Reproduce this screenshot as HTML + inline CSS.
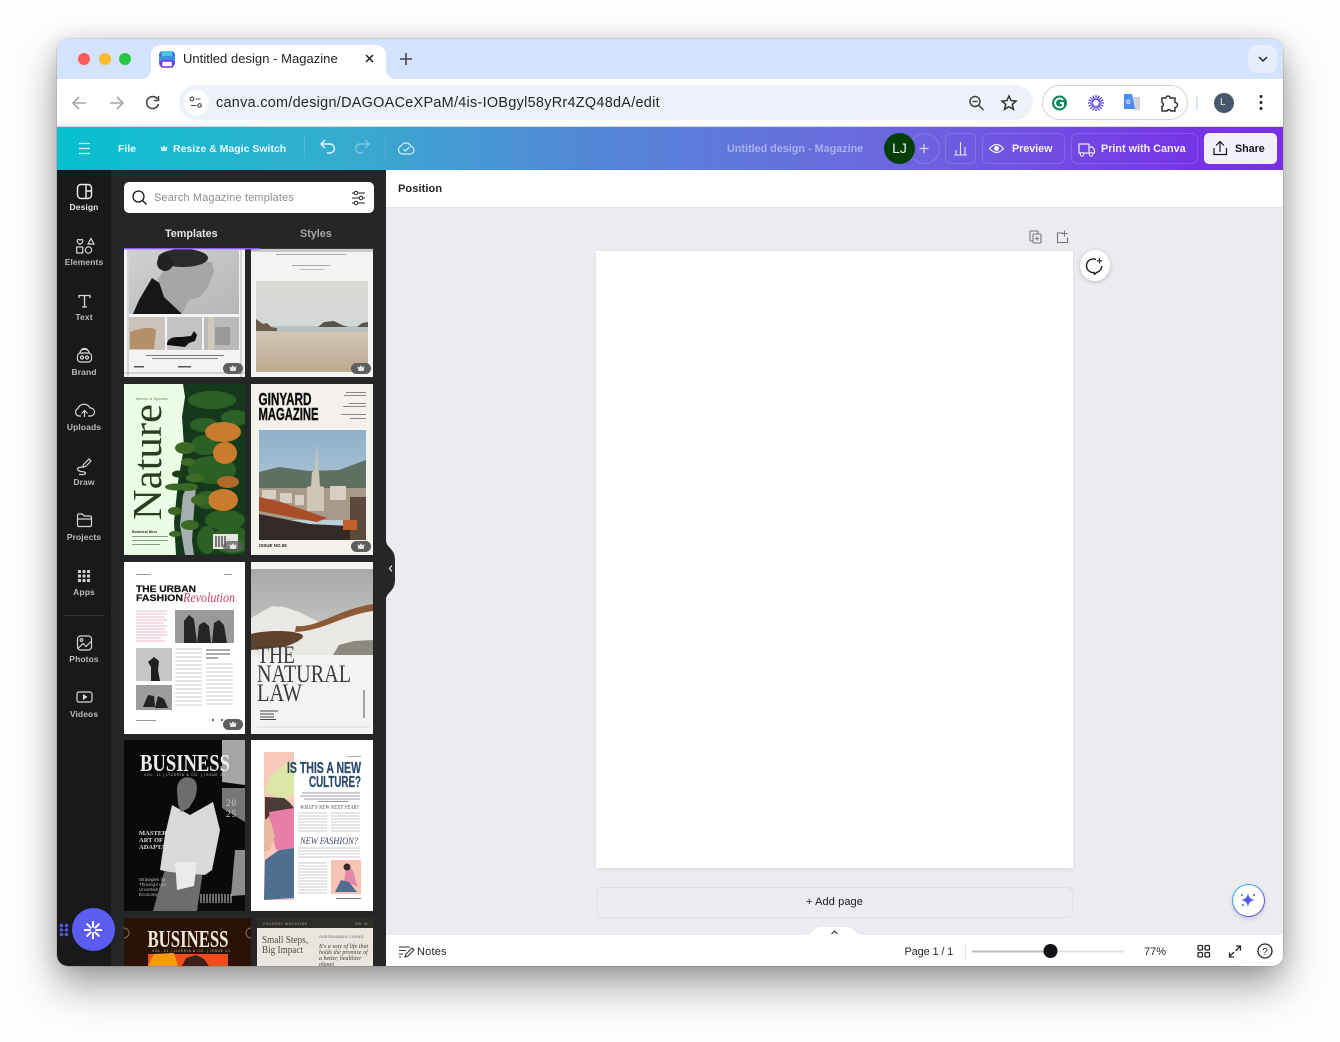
<!DOCTYPE html>
<html><head><meta charset="utf-8"><title>Untitled design - Magazine</title>
<style>
*{box-sizing:border-box}
html,body{margin:0;padding:0;width:1340px;height:1042px;overflow:hidden;background:#fdfdfd;font-family:"Liberation Sans",sans-serif}
.a{position:absolute}
#win{position:absolute;left:57px;top:39px;width:1226px;height:927px;border-radius:11px;box-shadow:0 0 1px rgba(0,0,0,.5),0 20px 40px rgba(0,0,0,.36),0 2px 22px rgba(0,0,0,.14)}
.t{position:absolute;white-space:nowrap}
.rail{position:absolute;left:57px;width:54px;text-align:center;font-size:8.5px;color:#b9babd;font-weight:bold;letter-spacing:.1px}
.hb{position:absolute;top:133px;height:31px;border:1px solid rgba(255,255,255,.14);border-radius:6px}
svg{position:absolute;overflow:visible}
#thumbs{filter:blur(.3px)}
</style></head><body>
<div id="win"></div>
<div class="a" style="left:57px;top:39px;width:1226px;height:927px;border-radius:11px;overflow:hidden;background:#fff">
<div class="a" style="left:0;top:0;width:1226px;height:40px;background:#d3e3fd"></div>
</div>
<!-- traffic lights -->
<div class="a" style="left:78px;top:53px;width:12px;height:12px;border-radius:50%;background:#fd5c57"></div>
<div class="a" style="left:99px;top:53px;width:12px;height:12px;border-radius:50%;background:#febb2e"></div>
<div class="a" style="left:119px;top:53px;width:12px;height:12px;border-radius:50%;background:#27c83f"></div>
<!-- tab -->
<div class="a" style="left:151px;top:45px;width:235px;height:34px;background:#fff;border-radius:10px 10px 0 0"></div>
<svg style="left:0;top:0" width="1340" height="130">
<path d="M141 79a10 10 0 0 0 10-10v10z" fill="#fff"/><path d="M396 79a10 10 0 0 1-10-10v10z" fill="#fff"/>
<rect x="159" y="51" width="16" height="16" rx="4" fill="#4a63e0"/><rect x="161.500" y="51" width="11" height="5" fill="#49c6dd"/><rect x="159" y="56" width="16" height="5" fill="#3f8fe2"/><rect x="161.500" y="61" width="11" height="6" rx="1" fill="#fff" stroke="#7d2ae8" stroke-width="1.500"/>
<path d="M366 55l7 7M373 55l-7 7" stroke="#1f1f1f" stroke-width="1.500"/>
<path d="M406 53v12M400 59h12" stroke="#444" stroke-width="1.600"/>
<path d="M86 103H74M79 97l-6 6 6 6" fill="none" stroke="#a5a7aa" stroke-width="1.600"/>
<path d="M110 103h12M117 97l6 6-6 6" fill="none" stroke="#a5a7aa" stroke-width="1.600"/>
<path d="M157.500 99a6 6 0 1 0 1 5" fill="none" stroke="#474747" stroke-width="1.600"/><path d="M158.500 96v4.500H154" fill="none" stroke="#474747" stroke-width="1.500"/>
</svg>
<div class="t" style="left:183px;top:51px;font-size:13px;color:#1f1f1f;letter-spacing:.03px">Untitled design - Magazine</div>
<!-- chevron pill -->
<div class="a" style="left:1248px;top:45px;width:29px;height:28px;border-radius:9px;background:#e6eefc"></div>
<svg style="left:0;top:0" width="1340" height="130"><path d="M1259 57l4 4 4-4" fill="none" stroke="#222" stroke-width="1.500"/></svg>
<!-- omnibox -->
<div class="a" style="left:179px;top:85px;width:854px;height:35px;border-radius:18px;background:#edf1f8"></div>
<div class="a" style="left:184px;top:90px;width:25px;height:25px;border-radius:50%;background:#fff"></div>
<svg style="left:0;top:0" width="1340" height="130">
<circle cx="192" cy="99" r="1.800" fill="none" stroke="#444" stroke-width="1.100"/><path d="M195.500 99h5M191 105.500h5.500" stroke="#444" stroke-width="1.100"/><circle cx="199.500" cy="105.500" r="1.800" fill="none" stroke="#444" stroke-width="1.100"/>
<circle cx="975" cy="101.500" r="5" fill="none" stroke="#444" stroke-width="1.500"/><path d="M979 105.500l4.500 4.500M972.500 101.500h5" stroke="#444" stroke-width="1.500"/>
<path d="M1009 96l2.100 4.600 5 .5-3.800 3.300 1.200 4.900-4.500-2.600-4.500 2.600 1.200-4.900-3.800-3.300 5-.5z" fill="none" stroke="#333" stroke-width="1.500"/>
</svg>
<div class="t" style="left:216px;top:95px;font-size:14.400px;color:#262626;letter-spacing:.3px">canva.com/design/DAGOACeXPaM/4is-IOBgyl58yRr4ZQ48dA/edit</div>
<!-- extension pill -->
<div class="a" style="left:1042px;top:85px;width:146px;height:35px;border-radius:18px;background:#fff;border:1.500px solid #d3d4d6"></div>
<svg style="left:0;top:0" width="1340" height="130">
<circle cx="1059.500" cy="103" r="7.500" fill="#14855f"/><path d="M1063 100a4.500 4.500 0 1 0 0 6v-3h-3" fill="none" stroke="#fff" stroke-width="1.800"/>
<g stroke="#5546ff" stroke-width="1.300"><path d="M1096 95v16M1088 103h16M1090.300 97.300l11.400 11.400M1101.700 97.300l-11.400 11.400M1092.800 95.600l6.400 14.800M1099.200 95.600l-6.400 14.800M1088.600 99.800l14.800 6.400M1103.400 99.800l-14.800 6.400"/></g><circle cx="1096" cy="103" r="3" fill="#fff"/>
<path d="M1132 97h8v13h-6z" fill="#cfd2d6"/><path d="M1124 94h8l3 15h-11z" fill="#4a8df0"/><text x="1126" y="104" font-size="6" fill="#fff" font-family="Liberation Sans" font-weight="bold">G</text>
<path d="M1162 98h4a2 2 0 0 1 4 0h5v4.500a2.200 2.200 0 0 1 0 5v3.500h-4a2.200 2.200 0 0 0-4 0h-5v-4.500a2.200 2.200 0 0 0 0-4z" fill="none" stroke="#333" stroke-width="1.500"/>
<path d="M1197 96v14" stroke="#c9dcf7" stroke-width="1.500"/>
<circle cx="1224" cy="103" r="10" fill="#45586c"/><circle cx="1261" cy="96.500" r="1.500" fill="#222"/><circle cx="1261" cy="102.500" r="1.500" fill="#222"/><circle cx="1261" cy="108.500" r="1.500" fill="#222"/>
</svg>
<div class="t" style="left:1220px;top:97px;font-size:10px;color:#e6ebef">L</div>
<div class="a" style="left:57px;top:126px;width:1226px;height:1px;background:#d9dadc"></div>
<!-- canva header -->
<div class="a" style="left:57px;top:127px;width:1226px;height:43px;background:linear-gradient(90deg,#05c0cf 0%,#34aecf 22%,#5289d6 42%,#6c67df 68%,#7636e6 92%,#7a2ee8 100%)"></div>
<svg style="left:0;top:0" width="1340" height="175">
<path d="M79 143.500h11M79 148.500h11M79 153.500h11" stroke="#d6f3f6" stroke-width="1.300"/>
<path d="M160.500 146l2 1.600 1.500-2.300 1.500 2.300 2-1.600-.8 5h-5.400z" fill="#c9eef3"/>
<path d="M304.500 137v22" stroke="#7cc8db" stroke-width=".8" stroke-dasharray="1 1"/>
<path d="M385 137v22" stroke="#67a9d6" stroke-width=".8"/>
<path d="M321 144h9a4.500 4.500 0 0 1 0 9h-3M325 140l-4 4 4 4" fill="none" stroke="#e8f6f9" stroke-width="1.400"/>
<path d="M369 144h-9a4.500 4.500 0 0 0 0 9h3M365 140l4 4-4 4" fill="none" stroke="#7ecbe0" stroke-width="1.400"/>
<path d="M403 154h7.500a3.800 3.800 0 0 0 .5-7.500 5.500 5.500 0 0 0-10-.5 4.200 4.200 0 0 0 2 8z" fill="none" stroke="#d8eef6" stroke-width="1.200"/><path d="M403.500 149l2 2 4-4" fill="none" stroke="#d8eef6" stroke-width="1.200"/>
</svg>
<div class="t" style="left:118px;top:143px;font-size:10.500px;font-weight:bold;color:#eefbfc">File</div>
<div class="t" style="left:173px;top:143px;font-size:10.500px;font-weight:bold;color:#eafafc">Resize &amp; Magic Switch</div>
<div class="t" style="left:727px;top:143px;font-size:10.800px;font-weight:bold;color:#a9b1ef">Untitled design - Magazine</div>
<div class="a" style="left:909px;top:133px;width:31px;height:31px;border-radius:50%;border:1px solid rgba(255,255,255,.16)"></div>
<div class="a" style="left:884px;top:133px;width:31px;height:31px;border-radius:50%;background:#063f06;color:#eef;font-size:14px;line-height:31px;text-align:center">LJ</div>
<div class="hb" style="left:945px;width:31px"></div>
<div class="hb" style="left:982px;width:83px"></div>
<div class="hb" style="left:1071px;width:127px"></div>
<div class="a" style="left:1204px;top:133px;width:73px;height:31px;border-radius:5px;background:#f2f0fc"></div>
<svg style="left:0;top:0" width="1340" height="175">
<path d="M924 144v9M919.500 148.500h9" stroke="#d8d4f8" stroke-width="1.300"/>
<path d="M954 155h13M956 155v-5M960.500 155v-13M965 155v-8" stroke="#e6e3fb" stroke-width="1.100"/>
<path d="M989.500 148.500q7-8 14 0q-7 8-14 0z" fill="none" stroke="#efecfd" stroke-width="1.200"/><circle cx="996.500" cy="148.500" r="2.500" fill="#efecfd"/>
<path d="M1079 144h9a1 1 0 0 1 1 1v8h-10zM1089 147h3.500l2 3v3h-5.500z" fill="none" stroke="#efecfd" stroke-width="1.200"/><circle cx="1082" cy="154.500" r="1.700" fill="#7638e5" stroke="#efecfd"/><circle cx="1091" cy="154.500" r="1.700" fill="#7638e5" stroke="#efecfd"/>
<path d="M1220 152v-10M1216 145.500l4-4 4 4M1214 148v6.500h12.500V148" fill="none" stroke="#17171f" stroke-width="1.200"/>
</svg>
<div class="t" style="left:1012px;top:143px;font-size:10.700px;font-weight:bold;color:#f2f0fd">Preview</div>
<div class="t" style="left:1101px;top:143px;font-size:10.800px;font-weight:bold;color:#f2f0fd">Print with Canva</div>
<div class="t" style="left:1235px;top:143px;font-size:10.700px;font-weight:bold;color:#14141c">Share</div>
<!-- side -->
<div class="a" style="left:57px;top:170px;width:54px;height:796px;background:#18191b;border-bottom-left-radius:11px"></div>
<div class="a" style="left:111px;top:170px;width:275px;height:796px;background:#252627"></div>
<div class="a" style="left:386px;top:170px;width:897px;height:37px;background:#fff"></div>
<div class="a" style="left:386px;top:207px;width:897px;height:728px;background:#ebecf0"></div>
<div class="a" style="left:386px;top:935px;width:897px;height:31px;background:#fff;border-bottom-right-radius:11px"></div>
<div class="a" style="left:386px;top:207px;width:897px;height:1px;background:#e3e4e8"></div>
<!-- rail labels -->
<div class="rail" style="top:201.500px;color:#e8e8ea">Design</div>
<div class="rail" style="top:256.500px">Elements</div>
<div class="rail" style="top:311.500px">Text</div>
<div class="rail" style="top:366.500px">Brand</div>
<div class="rail" style="top:421.500px">Uploads</div>
<div class="rail" style="top:476.500px">Draw</div>
<div class="rail" style="top:531.500px">Projects</div>
<div class="rail" style="top:586.500px">Apps</div>
<div class="rail" style="top:653.500px">Photos</div>
<div class="rail" style="top:708.500px">Videos</div>
<svg style="left:0;top:0" width="400" height="970">
<g fill="none" stroke="#d6d7d9" stroke-width="1.200">
<g stroke="#f0f0f2" stroke-width="1.400"><rect x="77.500" y="184.500" width="14" height="14" rx="3.500"/><path d="M86 185v13M86 191h5"/></g>
<path d="M80 244.500c-4-3-3-5-1.500-5s1.500 1 1.500 1 .5-1 1.800-1 2 2.500-1.800 5zM88 244l3-5.500 3 5.500z"/><rect x="76.700" y="247" width="6" height="6"/><circle cx="88.500" cy="250" r="3.200"/>
<path d="M79 298v-2.500h11v2.500M84.500 295.500v11.500M82 307h5" stroke-width="1.300"/>
<rect x="77.500" y="353" width="14" height="9" rx="3"/><path d="M80 353c0-5 9-5 9 0M81 350c2-2 5-2 7 0"/><circle cx="82" cy="357.500" r="1.500"/><circle cx="87" cy="357.500" r="1.500"/>
<path d="M81 416h-2.500a4 4 0 0 1-.5-7.500 6.500 6.500 0 0 1 12-.5 4 4 0 0 1 1 8h-3M84.500 417v-6M81.500 413.500l3-3 3 3"/>
<path d="M89 459l2 2-5.500 5.500-2.500 .5 .5-2.500zM84 467c-6 0-8 1.500-5.500 3.500s7 .5 7 2.500-3 1.500-6.500 1.500"/>
<path d="M77.500 525v-9.500a1.500 1.500 0 0 1 1.500-1.500h3.500l1.500 2h6a1.500 1.500 0 0 1 1.500 1.500v7.500a1.500 1.500 0 0 1-1.500 1.500H79a1.500 1.500 0 0 1-1.500-1.500zM77.500 519h14"/>
<rect x="77.500" y="636" width="14" height="14" rx="3"/><circle cx="81.500" cy="640" r="1.300"/><path d="M78 648.500l5-5 3 3 5-5"/>
<rect x="77" y="692" width="15" height="10" rx="2"/><path d="M83.500 695v4l3-2z" fill="#d6d7d9"/>
</g>
<g fill="#d6d7d9"><rect x="78" y="570" width="3" height="3" rx=".8"/><rect x="82.500" y="570" width="3" height="3" rx=".8"/><rect x="87" y="570" width="3" height="3" rx=".8"/><rect x="78" y="574.500" width="3" height="3" rx=".8"/><rect x="82.500" y="574.500" width="3" height="3" rx=".8"/><rect x="87" y="574.500" width="3" height="3" rx=".8"/><rect x="78" y="579" width="3" height="3" rx=".8"/><rect x="82.500" y="579" width="3" height="3" rx=".8"/><rect x="87" y="579" width="3" height="3" rx=".8"/></g>
<path d="M64 615.500h41" stroke="#303134"/>
<g fill="#4f5bd5"><circle cx="61.500" cy="925.500" r="1.800"/><circle cx="66.500" cy="925.500" r="1.800"/><circle cx="61.500" cy="930" r="1.800"/><circle cx="66.500" cy="930" r="1.800"/><circle cx="61.500" cy="934.500" r="1.800"/><circle cx="66.500" cy="934.500" r="1.800"/></g>
</svg>
<div class="a" style="left:72px;top:908px;width:43px;height:43px;border-radius:50%;background:#5b5cf0"></div>
<svg style="left:0;top:0" width="400" height="970"><g stroke="#fff" stroke-width="2"><path d="M93 921v18M84 930h18M86.600 923.600l12.800 12.800M99.400 923.600l-12.800 12.800"/></g><circle cx="93" cy="930" r="2.500" fill="#5b5cf0"/></svg>
<!-- search -->
<div class="a" style="left:124px;top:182px;width:250px;height:31px;border-radius:5px;background:#fff"></div>
<svg style="left:0;top:0" width="400" height="240">
<circle cx="138.500" cy="196.500" r="5.500" fill="none" stroke="#16171a" stroke-width="1.300"/><path d="M142.500 200.500l4 4" stroke="#16171a" stroke-width="1.300"/>
<path d="M352 193h13M352 198h13M352 203h13" stroke="#222" stroke-width="1"/><circle cx="356" cy="193" r="1.800" fill="#fff" stroke="#222"/><circle cx="361" cy="198" r="1.800" fill="#fff" stroke="#222"/><circle cx="356" cy="203" r="1.800" fill="#fff" stroke="#222"/>
</svg>
<div class="t" style="left:154px;top:192px;font-size:10.800px;color:#8b8c90;letter-spacing:.25px">Search Magazine templates</div>
<div class="t" style="left:165px;top:228px;font-size:10.800px;font-weight:bold;color:#e6e6e8">Templates</div>
<div class="t" style="left:300px;top:228px;font-size:10.800px;font-weight:bold;color:#a5a6a9">Styles</div>
<div class="a" style="left:124px;top:248px;width:250px;height:1px;background:#3a3b3d"></div>
<!-- thumbnails -->
<svg id="thumbs" style="left:0;top:0" width="400" height="966" font-family="Liberation Sans">
<defs>
<linearGradient id="g1" x1="0" y1="0" x2="1" y2="1"><stop offset="0" stop-color="#cfd0d1"/><stop offset="1" stop-color="#b5b6b8"/></linearGradient>
<linearGradient id="sky" x1="0" y1="0" x2="0" y2="1"><stop offset="0" stop-color="#d9dad6"/><stop offset="1" stop-color="#cfd5d4"/></linearGradient>
<linearGradient id="sand" x1="0" y1="0" x2="0" y2="1"><stop offset="0" stop-color="#d4c8b6"/><stop offset="1" stop-color="#bba98f"/></linearGradient>
<linearGradient id="blue" x1="0" y1="0" x2="0" y2="1"><stop offset="0" stop-color="#8eb1c9"/><stop offset="1" stop-color="#c5d3dc"/></linearGradient>
<linearGradient id="snow" x1="0" y1="0" x2="0" y2="1"><stop offset="0" stop-color="#a8aaa8"/><stop offset="1" stop-color="#cdcdc9"/></linearGradient>
<clipPath id="c0"><rect x="124" y="249" width="249" height="717"/></clipPath>
<clipPath id="c7"><rect x="124" y="740" width="121" height="171"/></clipPath>
<clipPath id="c3"><rect x="124" y="384" width="121" height="171"/></clipPath>
</defs>
<g clip-path="url(#c0)">
<!-- 1 -->
<rect x="124" y="249" width="121" height="128" fill="#f3f3f5"/>
<rect x="129" y="250" width="110" height="64" fill="url(#g1)"/>
<path d="M133 314l6-14 13-22 12 8 6 10 12 18z" fill="#171717"/>
<path d="M170 262l42 0 2 10-3 7-4 10-7 8-11 3-7 14-18-17-6-18z" fill="#a6a6a6"/>
<ellipse cx="183" cy="258" rx="25" ry="9" fill="#2b2b2b"/><circle cx="165" cy="263" r="8" fill="#222"/>
<rect x="129" y="317" width="36" height="33" fill="#c9c3bb"/><path d="M130 349v-17c10-4 22-6 26-2l-2 19z" fill="#b58f68"/>
<rect x="167" y="317" width="35" height="33" fill="#c3c3c3"/><path d="M167 345c0-8 8-8 14-8l10-1 3-5 3 4-2 6-6 2-4 4z" fill="#101010"/>
<rect x="204" y="317" width="35" height="33" fill="#b9babb"/><rect x="208" y="317" width="6" height="33" fill="#d0c8ba"/><rect x="215" y="327" width="15" height="18" fill="#9a9a9a"/>
<rect x="146" y="355" width="78" height="1" fill="#777"/><rect x="152" y="358" width="66" height="1" fill="#888"/>
<rect x="134" y="366" width="10" height="1.500" fill="#555"/><rect x="178" y="366" width="13" height="1.500" fill="#555"/>
<path d="M124 373h121M128 377v-128M241 377v-128" stroke="#9d9d9f" stroke-width=".7"/>
<!-- 2 -->
<rect x="251" y="249" width="122" height="128" fill="#f3f3f3"/>
<rect x="251" y="249" width="122" height="3" fill="#c8c8c8"/>
<rect x="276" y="254" width="70" height="1" fill="#aaa"/><rect x="292" y="265" width="38" height="1" fill="#aaa"/><rect x="300" y="269" width="24" height="1" fill="#bbb"/>
<rect x="256" y="281" width="112" height="91" fill="url(#sky)"/>
<rect x="256" y="328" width="112" height="44" fill="url(#sand)"/>
<rect x="256" y="326" width="112" height="6" fill="#b9c1c2"/>
<path d="M256 319l7 5 4-1 4 4 6 1v3h-21z" fill="#6d5a4a"/>
<path d="M318 327l6-5 10-1 8 4 6 2z" fill="#56544b"/><path d="M357 327l5-4 6-1v5z" fill="#5b584e"/>
<!-- 3 -->
<rect x="124" y="384" width="121" height="171" fill="#15391a"/>
<g clip-path="url(#c3)">
<g fill="#2c6126"><ellipse cx="212" cy="400" rx="24" ry="9" /><ellipse cx="235" cy="418" rx="14" ry="8"/><ellipse cx="204" cy="425" rx="14" ry="7"/><ellipse cx="205" cy="445" rx="14" ry="10"/><ellipse cx="212" cy="470" rx="24" ry="14"/><ellipse cx="225" cy="520" rx="20" ry="10"/><ellipse cx="232" cy="540" rx="20" ry="14"/><ellipse cx="208" cy="500" rx="14" ry="9"/><ellipse cx="207" cy="540" rx="10" ry="14"/></g>
<path d="M124 384h59l2 13-3 20 2 30-6 35-4 40 2 33h-52z" fill="#ecfde5"/>
<path d="M185 555l-5-30 3-30 5-10 8 1-2 25-2 30 2 14z" fill="#a6aeb0"/>
<g fill="#c97c2c"><ellipse cx="223" cy="432" rx="18" ry="10"/><ellipse cx="225" cy="453" rx="12" ry="11"/><ellipse cx="228" cy="482" rx="11" ry="6" fill="#b06a28"/><ellipse cx="223" cy="500" rx="15" ry="11"/></g>
<g fill="#3c6a24"><ellipse cx="185" cy="448" rx="10" ry="6"/><ellipse cx="188" cy="462" rx="7" ry="4"/><ellipse cx="195" cy="478" rx="9" ry="4.500"/><ellipse cx="178" cy="474" rx="6" ry="3.500" fill="#1f3d16"/><ellipse cx="176" cy="487" rx="11" ry="3.500"/><ellipse cx="188" cy="487" rx="10" ry="4"/><ellipse cx="200" cy="500" rx="9" ry="5"/><ellipse cx="175" cy="511" rx="7" ry="4"/><ellipse cx="190" cy="525" rx="9" ry="5"/><ellipse cx="175" cy="534" rx="6" ry="3"/></g>
<text transform="translate(161,520) rotate(-90)" font-family="Liberation Serif" font-size="41" fill="#2b3d20" textLength="116" lengthAdjust="spacingAndGlyphs">Nature</text>
<text x="136" y="400" font-size="4" fill="#6a7d60">Interior &amp; Spacew</text>
<text x="132" y="533" font-size="3.500" font-weight="bold" fill="#333">Botanical Bliss</text>
<rect x="132" y="536" width="36" height="1" fill="#8a9a84"/><rect x="132" y="540" width="36" height="1" fill="#8a9a84"/><rect x="132" y="544" width="28" height="1" fill="#8a9a84"/>
<rect x="213" y="534" width="25" height="15" fill="#e4e4e2"/><path d="M216 536v11M219 536v11M222 536v11M225 536v11" stroke="#333" stroke-width="1.200"/>
</g>
<!-- 4 -->
<rect x="251" y="384" width="122" height="171" fill="#f4f0ec"/>
<text x="258.500" y="405" font-size="17.500" font-weight="bold" fill="#0d0d0d" stroke="#0d0d0d" stroke-width=".4" textLength="53" lengthAdjust="spacingAndGlyphs">GINYARD</text>
<text x="258.500" y="420" font-size="17.500" font-weight="bold" fill="#0d0d0d" stroke="#0d0d0d" stroke-width=".4" textLength="60" lengthAdjust="spacingAndGlyphs">MAGAZINE</text>
<g fill="#888"><rect x="346" y="392" width="20" height="1"/><rect x="344" y="395" width="22" height="1"/><rect x="349" y="403" width="17" height="1"/><rect x="343" y="406" width="23" height="1"/><rect x="341" y="414" width="25" height="1"/><rect x="350" y="418" width="16" height="1"/></g>
<rect x="259" y="430" width="107" height="110" fill="url(#blue)"/>
<path d="M259 472l20-5 30 4 30-1 27-10v40H259z" fill="#5f7063"/>
<path d="M259 488h107v32H259z" fill="#a89a8b"/>
<g fill="#d8cfc2"><rect x="262" y="490" width="14" height="9"/><rect x="280" y="493" width="12" height="10"/><rect x="330" y="486" width="16" height="14"/><rect x="295" y="495" width="9" height="10"/></g>
<path d="M317 443l-2 27-3 2-1 14-4 1v24h17v-24l-4-1-1-14-1-2z" fill="#cfc6b5"/>
<path d="M259 514l50 10 40 2 17-4v18H259z" fill="#332a27"/><path d="M259 497l22 5 46 16-10 4-58-11z" fill="#a84d27"/><path d="M350 497h16v43h-16z" fill="#5b4a3a"/><path d="M343 520h14v10h-14z" fill="#c2602c"/>
<text x="259" y="547" font-size="4.500" font-weight="bold" fill="#222">ISSUE NO.06</text>
<!-- 5 -->
<rect x="124" y="562" width="121" height="172" fill="#fff"/>
<rect x="136" y="574" width="15" height="1" fill="#999"/><rect x="224" y="574" width="8" height="1" fill="#999"/>
<text x="136" y="592" font-size="9.200" font-weight="bold" fill="#141414" textLength="60" lengthAdjust="spacingAndGlyphs" stroke="#141414" stroke-width=".2">THE URBAN</text>
<text x="136" y="601" font-size="9.200" font-weight="bold" fill="#141414" textLength="47" lengthAdjust="spacingAndGlyphs" stroke="#141414" stroke-width=".2">FASHION</text>
<text x="183" y="602" font-family="Liberation Serif" font-style="italic" font-size="14" fill="#c9405f" textLength="52" lengthAdjust="spacingAndGlyphs">Revolution</text>
<path d="M136 611h31M136 614h31M136 617h29M136 620h31M136 623h27M136 626h31M136 629h29M136 632h31M136 635h31M136 638h25M136 641h29" stroke="#e8a0b2" stroke-width=".8"/>
<rect x="175" y="610" width="59" height="33" fill="#9a9a9a"/><path d="M184 643v-22l5-6 5 4 3 24zM197 643l2-18 5-3 5 4 2 17zM212 643l2-20 5-3 5 5 3 18z" fill="#252525"/>
<rect x="136" y="648" width="36" height="33" fill="#c6c6c6"/><path d="M151 681v-14l-3-5 6-5 5 4-1 9 2 11z" fill="#202020"/>
<rect x="136" y="685" width="36" height="25" fill="#9c9c9c"/><path d="M143 707l5-12 6 1 1 11zM155 708l3-12 6 3 4 9z" fill="#232323"/>
<g stroke="#bbb" stroke-width=".8"><path d="M175 649h27M175 653h27M175 657h27M175 661h27M175 665h27M175 669h27M175 673h27M175 677h27M175 681h27M175 685h27M175 689h27M175 693h27M175 697h27M175 701h27M175 705h27M206 664h27M206 668h27M206 672h27M206 676h27M206 680h27M206 684h27M206 688h27M206 692h27M206 696h27M206 700h27M206 704h27"/></g>
<path d="M206 650h24M206 654h24M206 658h12" stroke="#555" stroke-width=".9"/>
<rect x="136" y="720" width="20" height="1" fill="#999"/><circle cx="213" cy="720" r="1" fill="#333"/><circle cx="222" cy="720" r="1" fill="#333"/>
<!-- 6 -->
<rect x="251" y="562" width="122" height="172" fill="#f3f3f1"/>
<rect x="251" y="569" width="122" height="86" fill="url(#snow)"/>
<path d="M251 618l21-12 12 1 15 5 20 10 54-18v51H251z" fill="#e9e8e4"/>
<path d="M296 626c22 2 40-16 77-22v7c-30 4-50 20-78 21z" fill="#8d5a38"/>
<path d="M251 634c15-4 40-4 50 0 7 3-6 10-18 13l-32 3z" fill="#5e432f"/>
<path d="M333 655l6-10 15-4 19-1v15z" fill="#8c8a80"/>
<g font-family="Liberation Serif" fill="#3a3c40" font-size="25"><text x="257" y="663" textLength="38" lengthAdjust="spacingAndGlyphs">THE</text><text x="257" y="682" textLength="94" lengthAdjust="spacingAndGlyphs">NATURAL</text><text x="257" y="701" textLength="45" lengthAdjust="spacingAndGlyphs">LAW</text></g>
<path d="M260 711h18M260 714h14M260 717h14M260 719.500h16" stroke="#444" stroke-width=".9"/><path d="M364 690v28" stroke="#888" stroke-width="1.500"/><path d="M257 727h113" stroke="#ddd"/>
<!-- 7 -->
<rect x="124" y="740" width="121" height="171" fill="#0a0a0a"/>
<g clip-path="url(#c7)">
<path d="M222 740h23v45l-23-3z" fill="#a5a5a5"/><path d="M222 788h23v34l-23-14z" fill="#777"/><path d="M235 850h10v45l-14 1z" fill="#8d8d8d"/>
<path d="M153 911l12-42 38 2-6 40z" fill="#6d6d6d"/>
<path d="M172 805l18 10 23-13 7 28-8 40-7 5-35-3-10-2 5-35z" fill="#d9d9d9"/>
<path d="M177 790c0-11 8-14 14-12 7 2 7 12 4 20l-6 10-8 4-3-8z" fill="#6d6d6d"/>
<path d="M175 862h22l-3 24-17 4z" fill="#eaeaea"/>
<text x="140" y="771" font-family="Liberation Serif" font-weight="bold" font-size="24" fill="#eee" textLength="90" lengthAdjust="spacingAndGlyphs">BUSINESS</text>
<text x="144" y="776" font-size="3.500" fill="#ccc" letter-spacing=".7">VOL. 11 | LICERIA &amp; CO. | ISSUE 23</text>
<text x="139" y="835" font-family="Liberation Serif" font-weight="bold" font-size="6.500" fill="#ddd">MASTERING THE</text><text x="139" y="842" font-family="Liberation Serif" font-weight="bold" font-size="6.500" fill="#ddd">ART OF</text><text x="139" y="849" font-family="Liberation Serif" font-weight="bold" font-size="6.500" fill="#ddd">ADAPTABILITY</text>
<text x="139" y="881" font-size="4.500" fill="#bbb">Strategies for</text><text x="139" y="886" font-size="4.500" fill="#bbb">Thriving in an</text><text x="139" y="891" font-size="4.500" fill="#bbb">Uncertain</text><text x="139" y="896" font-size="4.500" fill="#bbb">Economy</text>
<text x="226" y="806" font-family="Liberation Serif" font-size="9" fill="#ccc" letter-spacing="1">20</text><text x="226" y="817" font-family="Liberation Serif" font-size="9" fill="#ccc" letter-spacing="1">25</text>
<g stroke="#ccc" stroke-width="1"><path d="M201 894v9M204 894v9M207 894v9M210 894v9M213 894v9M216 894v9M219 894v9M222 894v9M225 894v9M228 894v9M231 894v9"/></g>
</g>
<!-- 8 -->
<rect x="251" y="740" width="122" height="171" fill="#fff"/>
<rect x="264" y="752" width="30" height="148" fill="#f8c9bb"/>
<path d="M265 792l3-10c2-8 16-20 26-20v33l-10 5z" fill="#dbe6a7"/>
<path d="M265 797l19 1 6 5 4 5-4 12-14 3-11-4z" fill="#4a3a38"/>
<path d="M269 812l25-4v40l-18 2-5-20z" fill="#e87ea7"/><path d="M264 822l5-6 6 20-5 14-6 2z" fill="#eab8a0"/>
<path d="M265 860l14-10 15-2v50l-30 2z" fill="#4f6f91"/>
<text x="287" y="773" font-size="15.500" font-weight="bold" fill="#2b4a6b" stroke="#2b4a6b" stroke-width=".3" textLength="74" lengthAdjust="spacingAndGlyphs">IS THIS A NEW</text>
<text x="309" y="787" font-size="15.500" font-weight="bold" fill="#2b4a6b" stroke="#2b4a6b" stroke-width=".3" textLength="52" lengthAdjust="spacingAndGlyphs">CULTURE?</text>
<path d="M302 793h58M300 796h60M304 799h56M318 801.500h30" stroke="#778" stroke-width=".8"/>
<text x="300" y="809" font-family="Liberation Serif" font-style="italic" font-size="6" fill="#777" textLength="59" lengthAdjust="spacingAndGlyphs" font-weight="bold">WHAT'S NEW NEXT YEAR?</text>
<g stroke="#bbb" stroke-width=".8"><path d="M298 813h29M298 816h29M298 819h29M298 822h29M298 825h29M298 828h29M298 831h29M331 813h29M331 816h29M331 819h29M331 822h29M331 825h29M331 828h29M331 831h29M298 848h62M298 851h62M298 854h62M298 857h62M298 863h29M298 866h29M298 869h29M298 872h29M298 875h29M298 878h29M298 881h29M298 884h29M298 887h29M298 890h29M298 893h29"/></g>
<text x="300" y="844" font-family="Liberation Serif" font-style="italic" font-size="9.500" fill="#3d4a60" textLength="58" lengthAdjust="spacingAndGlyphs">NEW FASHION?</text>
<rect x="331" y="860" width="30" height="34" fill="#f6c3b4"/><path d="M344 882l2-12 5-2 3 5 1 6 3 8-6-3z" fill="#e585ab"/><path d="M335 892l6-12 8 2 8 10z" fill="#4f6f91"/><circle cx="347" cy="867" r="3.500" fill="#3b2b28"/>
<rect x="336" y="898" width="25" height="1" fill="#777"/><rect x="347" y="756" width="14" height="1" fill="#aaa"/>
<!-- 9 -->
<rect x="124" y="918" width="127" height="48" fill="#2a1206"/>
<rect x="148" y="954" width="80" height="12" fill="#f04d18"/><path d="M148 966l6-12 20-1 4 13z" fill="#f49a0b"/><path d="M182 966l4-8 10-3 8 4 5 7z" fill="#40201a"/>
<text x="147.500" y="947" font-family="Liberation Serif" font-weight="bold" font-size="24" fill="#f1e9dc" textLength="81" lengthAdjust="spacingAndGlyphs">BUSINESS</text>
<text x="152" y="952" font-size="3.500" fill="#c7b9a3" letter-spacing=".6">VOL. 01 | LICERIA &amp; CO. | ISSUE 23</text>
<path d="M124 928a5 5 0 0 1 0 10M251 928a5 5 0 0 0 0 10" stroke="#866" fill="none"/>
<!-- 10 -->
<rect x="257" y="918" width="116" height="48" fill="#2e2c27"/>
<rect x="257" y="928" width="116" height="38" fill="#eae6df"/>
<text x="263" y="925" font-size="3.500" fill="#a9a59b" letter-spacing=".5">FOUNDRY MAGAZINE</text><text x="355" y="925" font-size="3.500" fill="#a9a59b">VOL. 01</text>
<text x="262" y="943" font-family="Liberation Serif" font-size="10" fill="#4f4b45" textLength="46" lengthAdjust="spacingAndGlyphs">Small Steps,</text>
<text x="262" y="953" font-family="Liberation Serif" font-size="10" fill="#4f4b45" textLength="41" lengthAdjust="spacingAndGlyphs">Big Impact</text>
<text x="319" y="938" font-size="3.800" fill="#555" letter-spacing=".3">SUSTAINABLE LIVING</text>
<g font-family="Liberation Serif" font-style="italic" font-size="6" fill="#403c37"><text x="319" y="948">It's a way of life that</text><text x="319" y="954">holds the promise of</text><text x="319" y="960">a better, healthier</text><text x="319" y="966">planet</text></g>
<!-- crowns -->
<g id="cr"><rect x="223" y="363" width="20" height="11" rx="5.500" fill="#5d5d5d"/><path d="M229.500 366l1.800 1.500 1.700-2.200 1.700 2.200 1.800-1.500-.8 5h-5.400z" fill="#e4e4e4"/></g>
<rect x="351" y="363" width="20" height="11" rx="5.500" fill="#5d5d5d"/><path d="M357.500 366l1.800 1.500 1.700-2.200 1.700 2.200 1.800-1.500-.8 5h-5.400z" fill="#e4e4e4"/>
<rect x="223" y="541" width="20" height="11" rx="5.500" fill="#5d5d5d" opacity=".75"/><path d="M229.500 544l1.800 1.500 1.700-2.200 1.700 2.200 1.800-1.500-.8 5h-5.400z" fill="#e4e4e4"/>
<rect x="351" y="541" width="20" height="11" rx="5.500" fill="#5d5d5d"/><path d="M357.500 544l1.800 1.500 1.700-2.200 1.700 2.200 1.800-1.500-.8 5h-5.400z" fill="#e4e4e4"/>
<rect x="223" y="719" width="20" height="11" rx="5.500" fill="#5d5d5d"/><path d="M229.500 722l1.800 1.500 1.700-2.200 1.700 2.200 1.800-1.500-.8 5h-5.400z" fill="#e4e4e4"/>
</g>
<!-- tab underline above thumbs -->
<rect x="124" y="248" width="136" height="1.500" fill="#8b5cf0"/>
<!-- collapse tab -->
<path d="M386 540c0 8 9 8 9 20v20c0 12-9 12-9 20z" fill="#252627"/>
<path d="M392 565.500l-2.500 3 2.500 3" fill="none" stroke="#ddd" stroke-width="1.300"/>
</svg>
<!-- right content -->
<div class="t" style="left:398px;top:183px;font-size:11px;font-weight:bold;color:#24252a;letter-spacing:.1px">Position</div>
<div class="a" style="left:596px;top:251px;width:477px;height:617px;background:#fff;box-shadow:0 1px 4px rgba(0,0,0,.08)"></div>
<div class="a" style="left:1080px;top:250px;width:30px;height:31px;border-radius:50%;background:#fff;box-shadow:0 1px 5px rgba(0,0,0,.2)"></div>
<div class="a" style="left:596px;top:887px;width:477px;height:31px;border-radius:6px;border:1px solid #dfe0e4"></div>
<div class="t" style="left:806px;top:896px;font-size:11px;color:#17181c;letter-spacing:.1px">+ Add page</div>
<div class="a" style="left:1232px;top:884px;width:33px;height:33px;border-radius:50%;background:linear-gradient(#fff,#fff) padding-box,linear-gradient(135deg,#22c8d8,#7d2ae8) border-box;border:1.500px solid transparent;box-shadow:0 2px 5px rgba(0,0,0,.15)"></div>
<svg style="left:0;top:0" width="1340" height="1000">
<g fill="none" stroke="#75767a" stroke-width="1.100"><rect x="1030" y="231" width="8" height="10" rx="1"/><rect x="1033" y="234" width="8" height="9" rx="1" fill="#ebecf0"/><path d="M1037 236.500v4M1035 238.500h4"/><path d="M1063 233h-5.500v9.500h10v-5M1064.500 230.500v6M1061.500 233.500h6"/></g>
<path d="M1096 259.500a6.800 6.800 0 1 0-2 13l.4 1.800 2.600-2a6.800 6.800 0 0 0 4.800-6.300" fill="none" stroke="#1c1c20" stroke-width="1.400"/><path d="M1099.500 258v5.500M1096.800 260.800h5.500" stroke="#1c1c20" stroke-width="1.100"/>
<path d="M1248 893c.8 4.500 2.500 6.200 7 7-4.500.8-6.200 2.500-7 7-.8-4.500-2.500-6.200-7-7 4.500-.8 6.200-2.500 7-7z" fill="#5158e8"/>
<circle cx="1242" cy="895" r="1.100" fill="#38b3e0"/><circle cx="1254" cy="895" r="1.100" fill="#6a6ce8"/><circle cx="1243" cy="905" r="1.100" fill="#5c7ee8"/>
<path d="M805 935c8 0 8-8 16-8h26c8 0 8 8 16 8z" fill="#fff"/>
<path d="M831.500 934l3-3 3 3" fill="none" stroke="#333" stroke-width="1.100"/>
<path d="M399 947h11M399 950.500h7M399 954h4M399 957h2" stroke="#333" stroke-width="1.100"/><path d="M405 957l1-3 6-6 2 2-6 6z" fill="none" stroke="#333" stroke-width="1.100"/>
<path d="M965.500 944v16" stroke="#e4e5e8"/>
<path d="M972 951.500h78" stroke="#b8bac4" stroke-width="2"/><path d="M1050 951.500h74" stroke="#dfe0e5" stroke-width="2"/>
<circle cx="1050.500" cy="951" r="7" fill="#121317"/>
<g fill="none" stroke="#26272c" stroke-width="1.300"><rect x="1198" y="945.500" width="4.500" height="4.500" rx="1"/><rect x="1205" y="945.500" width="4.500" height="4.500" rx="1"/><rect x="1198" y="952.500" width="4.500" height="4.500" rx="1"/><rect x="1205" y="952.500" width="4.500" height="4.500" rx="1"/>
<path d="M1229.500 956.500l4.500-4.500M1229.500 952.500v4.500h4.500M1240 946.500l-4.500 4.500M1236 946h4.500v4.500"/>
<circle cx="1265" cy="951" r="7"/></g>
<text x="1265" y="955" font-family="Liberation Sans" font-size="10" text-anchor="middle" fill="#26272c">?</text>
</svg>
<div class="t" style="left:417px;top:946px;font-size:11px;color:#26272c;letter-spacing:.2px">Notes</div>
<div class="t" style="left:904.500px;top:946px;font-size:11px;color:#26272c;letter-spacing:-.15px">Page 1 / 1</div>
<div class="t" style="left:1144px;top:946px;font-size:11px;color:#26272c">77%</div>
</body></html>
